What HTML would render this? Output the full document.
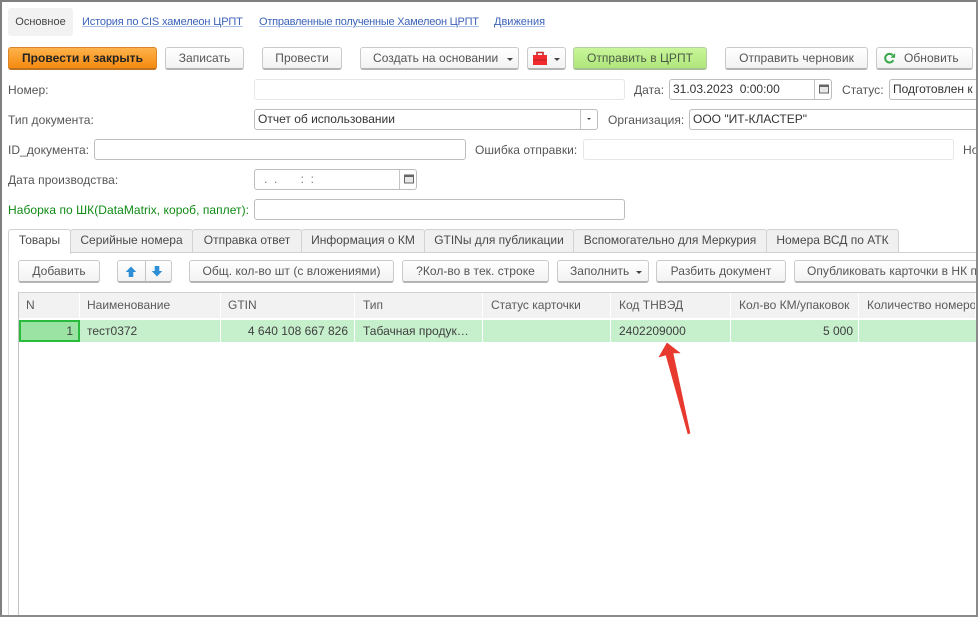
<!DOCTYPE html>
<html><head><meta charset="utf-8">
<style>
html,body{margin:0;padding:0;background:#fff}
#p{position:relative;width:979px;height:617px;overflow:hidden;background:#fff;font:12px/16px "Liberation Sans",sans-serif;color:#4b4b4b;filter:blur(.35px)}
#p div,#p span.t{position:absolute;white-space:nowrap;box-sizing:border-box}
.t{position:absolute}
.b{height:23px;top:47px;border:1px solid #cacaca;border-bottom:2px solid #b4b4b4;border-radius:3px;background:linear-gradient(#fff,#f2f2f2);text-align:center;line-height:20px;color:#555;letter-spacing:.04px}
.i{height:21px;border:1px solid #bdbdbd;border-radius:3px;background:#fff;color:#333;line-height:19px;padding-left:3px}
.il{border-color:#e6e6e6}
.l{line-height:16px;color:#555;letter-spacing:.05px}
.a{color:#3c62b8;font-size:11px;text-decoration:underline;text-decoration-color:#a9c0e8;top:14px}
.tab{top:229px;height:24px;background:#f0f0f0;border:1px solid #d2d2d2;border-radius:3px 3px 0 0;text-align:center;line-height:21px;color:#4a4a4a}
.tb{top:260px}
.h{top:293px;height:25px;background:#f2f2f2;border-right:2px solid #fff;line-height:24px;padding-left:7px;color:#5a5a5a}
.h2{padding-left:8px}
.r{top:320px;height:22px;background:#c6efcc;border-right:2px solid #fff;line-height:22px;padding:0 6px 0 7px;color:#404040}
.d{width:1px;background:#c4c4c4}
</style></head><body>
<div id="p">

<div style="left:8px;top:8px;width:65px;height:28px;background:#f2f2f2;border-radius:3px;text-align:center;line-height:29px;font-size:11px;color:#444">Основное</div>
<div class="a" style="left:82px;letter-spacing:-.15px">История по CIS хамелеон ЦРПТ</div>
<div class="a" style="left:259px;letter-spacing:-.24px">Отправленные полученные Хамелеон ЦРПТ</div>
<div class="a" style="left:494px">Движения</div>

<div class="b" style="left:8px;width:149px;background:linear-gradient(#fdb24a,#f58a10);border-color:#d9862a;border-bottom-color:#bd7420;color:#222;font-weight:bold">Провести и закрыть</div>
<div class="b" style="left:165px;width:79px">Записать</div>
<div class="b" style="left:262px;width:80px">Провести</div>
<div class="b" style="left:360px;width:159px;text-align:left;padding-left:12px">Создать на основании</div>
<div style="left:507px;top:58px;border:3px solid transparent;border-top-color:#444;border-bottom:0"></div>
<div class="b" style="left:527px;width:39px"></div>
<svg style="position:absolute;left:532px;top:51px" width="16" height="15" viewBox="0 0 16 15"><path d="M5 4V1.500h6V4" fill="none" stroke="#c0282d" stroke-width="1.600"/><rect x="1" y="4" width="14" height="10" fill="#f02a2e"/><rect x="1" y="8.500" width="14" height="1" fill="#b82024"/></svg>
<div style="left:554px;top:58px;border:3px solid transparent;border-top-color:#444;border-bottom:0"></div>
<div class="b" style="left:573px;width:134px;background:linear-gradient(#c9f59a,#afe67c);border-color:#b5cfa0;border-bottom-color:#a4bf90;color:#4a5a44">Отправить в ЦРПТ</div>
<div class="b" style="left:725px;width:143px">Отправить черновик</div>
<div class="b" style="left:876px;width:97px;text-align:left;padding-left:27px">Обновить</div>
<svg style="position:absolute;left:883px;top:52px" width="13" height="13" viewBox="0 0 13 13"><path d="M10.300 8.200A4.300 4.300 0 1 1 9.600 3.200" fill="none" stroke="#37a84a" stroke-width="2"/><path d="M7.500 5.800h4.600V1z" fill="#37a84a"/></svg>

<div class="l t" style="left:8px;top:82px">Номер:</div>
<div class="i il" style="left:254px;top:79px;width:371px"></div>
<div class="l t" style="left:634px;top:82px">Дата:</div>
<div class="i" style="left:669px;top:79px;width:163px">31.03.2023&nbsp; 0:00:00</div>
<div class="d" style="left:814px;top:80px;height:19px"></div>
<svg style="position:absolute;left:819px;top:84px" width="10" height="10" viewBox="0 0 10 10"><rect x=".5" y="1" width="9" height="8" fill="#e8e8e8" stroke="#666"/><rect x=".5" y="1" width="9" height="2" fill="#666"/></svg>
<div class="l t" style="left:842px;top:82px">Статус:</div>
<div class="i" style="left:889px;top:79px;width:100px">Подготовлен к</div>

<div class="l t" style="left:8px;top:112px">Тип документа:</div>
<div class="i" style="left:254px;top:109px;width:344px">Отчет об использовании</div>
<div class="d" style="left:580px;top:110px;height:19px"></div>
<div style="left:587px;top:118px;border:2.500px solid transparent;border-top-color:#444;border-bottom:0"></div>
<div class="l t" style="left:608px;top:112px">Организация:</div>
<div class="i" style="left:689px;top:109px;width:300px">ООО "ИТ-КЛАСТЕР"</div>

<div class="l t" style="left:8px;top:142px">ID_документа:</div>
<div class="i" style="left:94px;top:139px;width:372px"></div>
<div class="l t" style="left:475px;top:142px">Ошибка отправки:</div>
<div class="i il" style="left:583px;top:139px;width:371px"></div>
<div class="l t" style="left:963px;top:142px">Но</div>

<div class="l t" style="left:8px;top:172px">Дата производства:</div>
<div class="i" style="left:254px;top:169px;width:163px;color:#777;padding-left:9px">. &nbsp;.&nbsp; &nbsp; &nbsp; &nbsp;: &nbsp;:</div>
<div class="d" style="left:399px;top:170px;height:19px"></div>
<svg style="position:absolute;left:404px;top:174px" width="10" height="10" viewBox="0 0 10 10"><rect x=".5" y="1" width="9" height="8" fill="#e8e8e8" stroke="#666"/><rect x=".5" y="1" width="9" height="2" fill="#666"/></svg>

<div class="t" style="left:8px;top:202px;color:#0f8a14;letter-spacing:.05px">Наборка по ШК(DataMatrix, короб, паплет):</div>
<div class="i" style="left:254px;top:199px;width:371px"></div>

<div style="left:8px;top:252px;width:968px;height:1px;background:#d2d2d2"></div>
<div style="left:8px;top:252px;width:1px;height:364px;background:#d8d8d8"></div>
<div class="tab" style="left:70px;width:123px">Серийные номера</div>
<div class="tab" style="left:192px;width:110px">Отправка ответ</div>
<div class="tab" style="left:301px;width:124px">Информация о КМ</div>
<div class="tab" style="left:424px;width:150px">GTINы для публикации</div>
<div class="tab" style="left:573px;width:194px">Вспомогательно для Меркурия</div>
<div class="tab" style="left:766px;width:133px">Номера ВСД по АТК</div>
<div class="tab" style="left:8px;width:63px;background:#fff;border-bottom:0;height:25px">Товары</div>

<div class="b tb" style="left:18px;width:82px">Добавить</div>
<div class="b tb" style="left:117px;width:55px"></div>
<div class="d" style="left:145px;top:261px;height:20px"></div>
<svg style="position:absolute;left:125px;top:266px" width="12" height="12" viewBox="0 0 12 12"><path d="M6 .5L11.300 6H8.300v5H3.700V6H.7z" fill="#2f8fd6"/></svg>
<svg style="position:absolute;left:151px;top:265px" width="12" height="12" viewBox="0 0 12 12"><path d="M6 11.500L11.300 6H8.300V1H3.700v5H.7z" fill="#2f8fd6"/></svg>
<div class="b tb" style="left:189px;width:205px">Общ. кол-во шт (с вложениями)</div>
<div class="b tb" style="left:402px;width:147px">?Кол-во в тек. строке</div>
<div class="b tb" style="left:557px;width:92px;text-align:left;padding-left:12px">Заполнить</div>
<div style="left:636px;top:271px;border:3px solid transparent;border-top-color:#444;border-bottom:0"></div>
<div class="b tb" style="left:656px;width:130px">Разбить документ</div>
<div class="b tb" style="left:794px;width:200px;text-align:left;padding-left:12px">Опубликовать карточки в НК п</div>

<div style="left:18px;top:292px;width:960px;height:325px;border:1px solid #d0d0d0;border-right:0;border-left:1px solid #c4c4c4"></div>
<div class="h" style="left:19px;width:62px">N</div>
<div class="h" style="left:80px;width:142px">Наименование</div>
<div class="h" style="left:221px;width:135px">GTIN</div>
<div class="h h2" style="left:355px;width:129px">Тип</div>
<div class="h h2" style="left:483px;width:129px">Статус карточки</div>
<div class="h h2" style="left:611px;width:121px">Код ТНВЭД</div>
<div class="h h2" style="left:731px;width:129px">Кол-во КМ/упаковок</div>
<div class="h h2" style="left:859px;width:118px;overflow:hidden">Количество номеров</div>

<div class="r" style="left:19px;width:61px;background:#9be3a2;border:2px solid #28bb3c;text-align:right;line-height:19px;padding:0 5px 0 0">1</div>
<div class="r" style="left:80px;width:142px">тест0372</div>
<div class="r" style="left:221px;width:135px;text-align:right">4 640 108 667 826</div>
<div class="r" style="left:355px;width:129px;padding-left:8px">Табачная продук…</div>
<div class="r" style="left:483px;width:129px"></div>
<div class="r" style="left:611px;width:121px;padding-left:8px">2402209000</div>
<div class="r" style="left:731px;width:129px;text-align:right;padding-right:5px">5 000</div>
<div class="r" style="left:859px;width:118px;border-right:0"></div>

<svg style="position:absolute;left:655px;top:340px" width="45" height="100" viewBox="0 0 45 100"><path d="M12 3L4 17L11 15L33 94L35 93L18 13L25 13z" fill="#e8392f" stroke="#e8392f" stroke-width=".6" stroke-linejoin="round"/></svg>

<div style="left:0;top:0;width:979px;height:2px;background:#7f7f7f"></div>
<div style="left:0;top:0;width:2px;height:617px;background:#7f7f7f"></div>
<div style="left:976px;top:0;width:2px;height:617px;background:#8a8a8a"></div>
<div style="left:978px;top:0;width:1px;height:617px;background:#fff"></div>
<div style="left:0;top:615px;width:978px;height:2px;background:#8a8a8a"></div>
</div>
</body></html>
